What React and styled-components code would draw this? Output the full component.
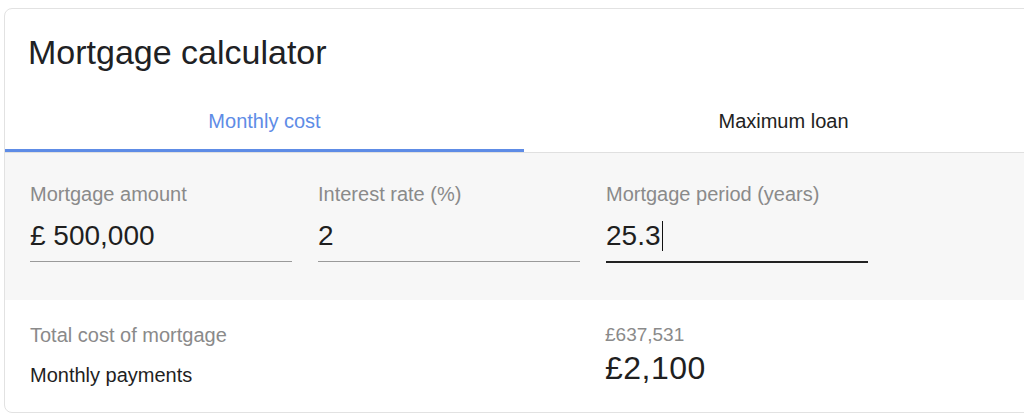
import React from 'react';
import styled, { createGlobalStyle } from 'styled-components';

const GlobalStyle = createGlobalStyle`
  html, body {
    margin: 0;
    padding: 0;
    overflow: hidden;
    background: #fff;
    font-family: "Liberation Sans", Arial, sans-serif;
  }
`;

const Card = styled.div`
  box-sizing: border-box;
  width: 1040px;
  height: 405px;
  margin: 8px 0 0 4px;
  border: 1px solid #e2e2e2;
  border-radius: 8px;
  overflow: hidden;
  display: flex;
  flex-direction: column;
  background: #fff;
`;

const Header = styled.div`
  padding: 23px 23px 0;
`;

const Title = styled.h1`
  margin: 0;
  font-size: 34px;
  line-height: 40px;
  font-weight: 400;
  color: #202124;
`;

const Tabs = styled.div`
  display: flex;
  margin-top: 37px;
  border-bottom: 1px solid #e0e0e0;
`;

const Tab = styled.div`
  flex: 1;
  text-align: center;
  font-size: 20px;
  line-height: 24px;
  padding-bottom: 16px;
  color: ${(p) => (p.$active ? '#5e8ce6' : '#222')};
  border-bottom: 3px solid ${(p) => (p.$active ? '#5e8ce6' : 'transparent')};
  cursor: pointer;
`;

const Inputs = styled.div`
  display: flex;
  gap: 26px;
  background: #f7f7f7;
  padding: 29px 25px 37px;
`;

const Field = styled.div`
  width: 262px;
  display: flex;
  flex-direction: column;
`;

const Label = styled.div`
  font-size: 20px;
  line-height: 24px;
  color: #8a8a8a;
`;

const Value = styled.div`
  margin-top: 13px;
  font-size: 28px;
  line-height: 34px;
  color: #1f1f1f;
  padding-bottom: 8px;
  border-bottom: ${(p) => (p.$focused ? '2px solid #222' : '1px solid #9a9a9a')};
  display: flex;
  align-items: center;
`;

const Caret = styled.span`
  display: inline-block;
  width: 1.5px;
  height: 30px;
  margin-left: 1px;
  background: #111;
`;

const Results = styled.div`
  display: grid;
  grid-template-columns: 575px auto;
  row-gap: 2px;
  align-items: end;
  padding: 23px 25px 24px;
`;

const ResultLabel = styled.div`
  font-size: 20px;
  line-height: 24px;
  color: ${(p) => (p.$muted ? '#8a8a8a' : '#1f1f1f')};
`;

const TotalValue = styled.div`
  font-size: 19px;
  line-height: 24px;
  color: #8a8a8a;
`;

const MonthlyValue = styled.div`
  font-size: 32px;
  line-height: 38px;
  color: #1f1f1f;
  letter-spacing: 0.5px;
`;

const fields = [
  { label: 'Mortgage amount', value: '£ 500,000' },
  { label: 'Interest rate (%)', value: '2' },
  { label: 'Mortgage period (years)', value: '25.3', focused: true },
];

export default function App() {
  return (
    <>
      <GlobalStyle />
      <Card>
        <Header>
          <Title>Mortgage calculator</Title>
        </Header>
        <Tabs>
          <Tab $active>Monthly cost</Tab>
          <Tab>Maximum loan</Tab>
        </Tabs>
        <Inputs>
          {fields.map((f) => (
            <Field key={f.label}>
              <Label>{f.label}</Label>
              <Value $focused={f.focused}>
                {f.value}
                {f.focused && <Caret />}
              </Value>
            </Field>
          ))}
        </Inputs>
        <Results>
          <ResultLabel $muted>Total cost of mortgage</ResultLabel>
          <TotalValue>£637,531</TotalValue>
          <ResultLabel>Monthly payments</ResultLabel>
          <MonthlyValue>£2,100</MonthlyValue>
        </Results>
      </Card>
    </>
  );
}
